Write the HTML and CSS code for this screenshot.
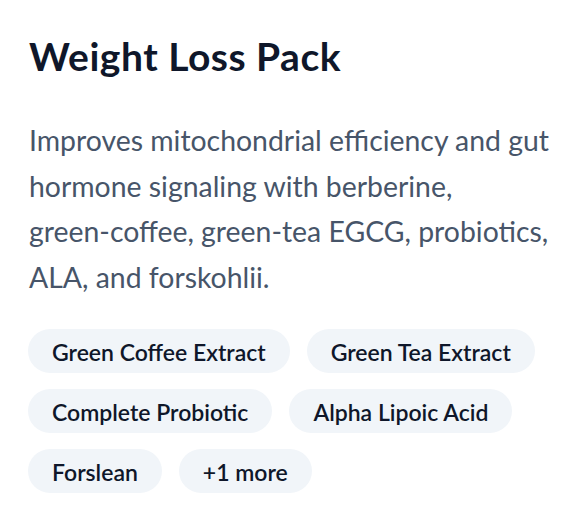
FILE: index.html
```html
<!DOCTYPE html>
<html lang="en">
<head>
<meta charset="utf-8">
<title>Weight Loss Pack</title>
<link rel="stylesheet" href="styles.css">
</head>
<body>
<section class="card">
  <h1 class="title">Weight Loss Pack</h1>
  <p class="desc">Improves mitochondrial efficiency and gut hormone signaling with berberine, <span class="nowrap">green-coffee,</span> <span class="nowrap">green-tea</span> EGCG, probiotics, ALA, and forskohlii.</p>
  <ul class="chips">
    <li class="chip">Green Coffee Extract</li>
    <li class="chip">Green Tea Extract</li>
    <li class="chip">Complete Probiotic</li>
    <li class="chip">Alpha Lipoic Acid</li>
    <li class="chip">Forslean</li>
    <li class="chip">+1 more</li>
  </ul>
</section>
</body>
</html>
```
FILE: styles.css
```css
html, body {
  margin: 0;
  padding: 0;
  background: #ffffff;
}
body {
  font-family: Lato, "Open Sans", sans-serif;
}
.card {
  box-sizing: border-box;
  width: 587px;
  padding: 30px 28px 28px 29px;
}
.title {
  margin: 0;
  font-size: 39px;
  line-height: 52px;
  font-weight: 700;
  letter-spacing: 0.5px;
  color: #0f172a;
}
.desc {
  margin: 36px 0 0 0;
  font-size: 28.4px;
  line-height: 45.5px;
  color: #475569;
}
.nowrap {
  white-space: nowrap;
}
.chips {
  list-style: none;
  margin: 29px 0 0 -1px;
  padding: 0;
  display: flex;
  flex-wrap: wrap;
  gap: 16px 17px;
}
.chip {
  background: #f1f5f9;
  color: #0f172a;
  border-radius: 22px;
  height: 44px;
  box-sizing: border-box;
  line-height: 42px;
  padding: 2px 24px 0 24px;
  font-size: 23px;
  font-weight: 600;
}
```
